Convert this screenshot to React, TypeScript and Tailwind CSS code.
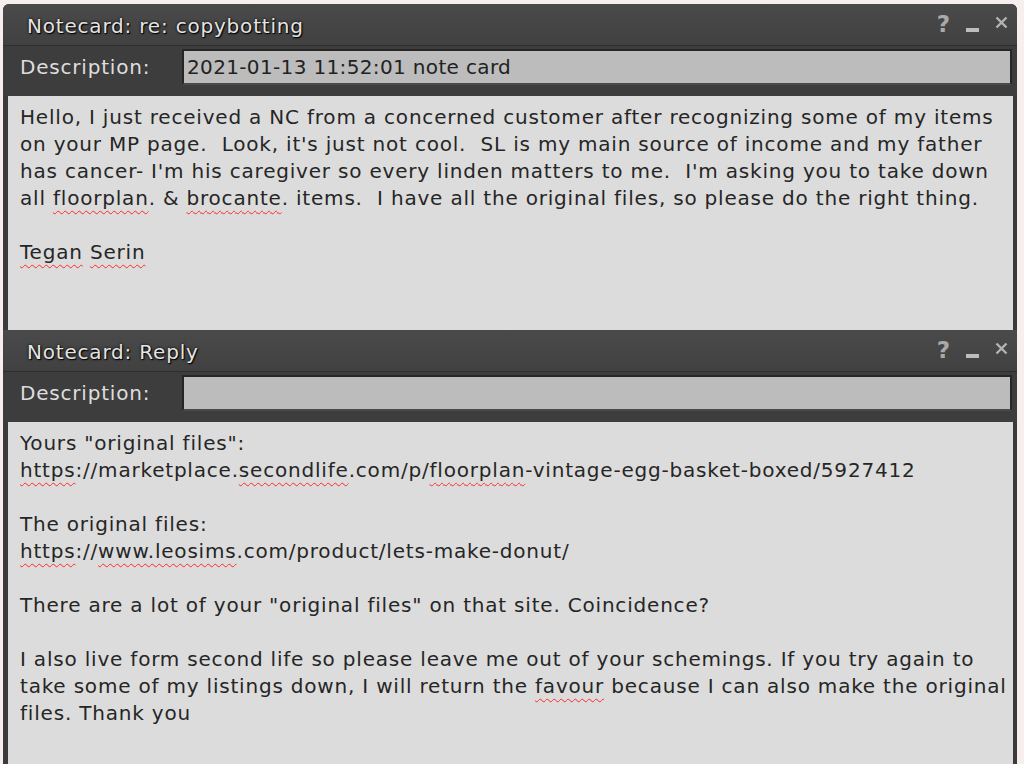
import React from 'react';

// Second Life style notecard windows, stacked

const firstNote: string[] = [
  'Hello, I just received a NC from a concerned customer after recognizing some of my items',
  "on your MP page.  Look, it's just not cool.  SL is my main source of income and my father",
  "has cancer- I'm his caregiver so every linden matters to me.  I'm asking you to take down",
  'all ~floorplan~. & ~brocante~. items.  I have all the original files, so please do the right thing.',
  '',
  '~Tegan~ ~Serin~',
];

const replyNote: string[] = [
  'Yours "original files":',
  '~https~://marketplace.~secondlife~.com/p/~floorplan~-vintage-egg-basket-boxed/5927412',
  '',
  'The original files:',
  '~https~://~www.leosims~.com/product/lets-make-donut/',
  '',
  'There are a lot of your "original files" on that site. Coincidence?',
  '',
  'I also live form second life so please leave me out of your schemings. If you try again to',
  'take some of my listings down, I will return the ~favour~ because I can also make the original',
  'files. Thank you',
];

// words wrapped in ~ get the spellcheck squiggle
function Line({ text }: { text: string }) {
  if (!text) return <div className="h-[27px]" />;
  const parts = text.split('~');
  return (
    <div className="h-[27px] whitespace-pre">
      {parts.map((p, i) =>
        i % 2 === 1 ? (
          <span
            key={i}
            className="underline decoration-wavy decoration-[#ff2a2a] decoration-1 underline-offset-[5px]"
          >
            {p}
          </span>
        ) : (
          <span key={i}>{p}</span>
        )
      )}
    </div>
  );
}

function TitleControls() {
  return (
    <div className="flex items-center gap-[16px] pr-[9px]">
      <span className="font-bold text-[23px] leading-none text-[#a9a9a9]">?</span>
      <div className="w-[13px] h-[4px] bg-[#bdbdbd] mt-[10px]" />
      <svg width="13" height="13" viewBox="0 0 13 13" className="-mt-[5px]">
        <path d="M1.5 1.5 L11.5 11.5 M11.5 1.5 L1.5 11.5" stroke="#b3b3b3" strokeWidth="2.4" />
      </svg>
    </div>
  );
}

interface NotecardProps {
  title: string;
  description: string;
  lines: string[];
  className: string;
  rounded?: boolean;
}

function Notecard({ title, description, lines, className, rounded }: NotecardProps) {
  return (
    <div
      className={`${className} ${
        rounded ? 'rounded-t-[6px]' : ''
      } bg-[#3b3b3b] flex flex-col overflow-hidden`}
    >
      {/* Title bar */}
      <div className="h-[42px] shrink-0 flex items-center justify-between pl-[24px] bg-gradient-to-b from-[#4a4a4a] to-[#414141] border-b border-[#2e2e2e]">
        <span className="pt-[3px] text-[20px] tracking-[0.8px] text-[#e4e4e4] [text-shadow:0_0_3px_#000,1px_1px_1px_#000]">
          {title}
        </span>
        <TitleControls />
      </div>

      {/* Description row */}
      <div className="h-[50px] shrink-0 flex items-start pt-[3px] pl-[17px] pr-[5px] bg-[#3d3d3d]">
        <span className="w-[162px] shrink-0 h-[36px] flex items-center text-[20px] tracking-[0.8px] text-[#dedede]">
          Description:
        </span>
        <div className="flex-1 h-[36px] bg-[#bcbcbc] border-2 border-[#262626] border-b-[#4a4a4a] flex items-center px-[3px] text-[20px] tracking-[0.35px] text-[#222]">
          {description}
        </div>
      </div>

      {/* Text body */}
      <div className="flex-1 ml-[5px] mr-[4px] bg-[#dcdcdc] pt-[6px] pl-[12px] text-[20px] text-[#262626] tracking-[0.8px]">
        {lines.map((l, i) => (
          <Line key={i} text={l} />
        ))}
      </div>
    </div>
  );
}

export default function App() {
  return (
    <div className="w-[1024px] h-[764px] overflow-hidden bg-[#f7eeee] pt-[4px] pl-[3px] pr-[7px] flex flex-col font-['DejaVu_Sans',sans-serif]">
      <Notecard
        className="h-[326px] shrink-0"
        rounded
        title="Notecard: re: copybotting"
        description="2021-01-13 11:52:01 note card"
        lines={firstNote}
      />
      <Notecard
        className="flex-1"
        title="Notecard: Reply"
        description=""
        lines={replyNote}
      />
    </div>
  );
}
